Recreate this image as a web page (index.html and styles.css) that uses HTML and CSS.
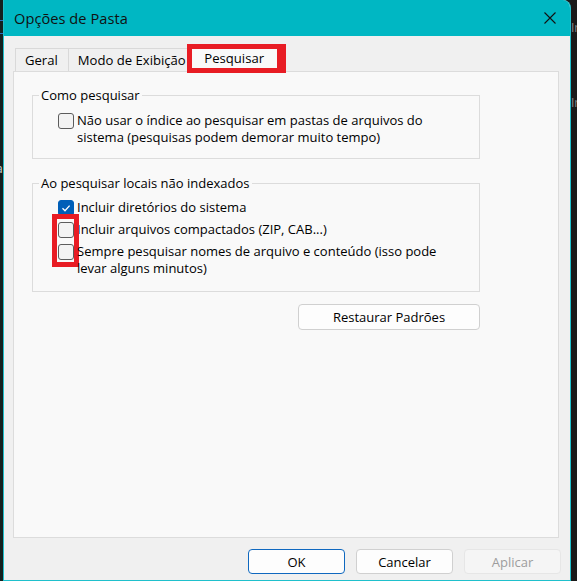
FILE: index.html
```html
<!DOCTYPE html>
<html lang="pt-BR">
<head>
<meta charset="utf-8">
<title>Opções de Pasta</title>
<link rel="stylesheet" href="styles.css">
</head>
<body>
<div class="desk">
  <div class="edge edge-left"><span class="frag frag-a"></span><span class="frag frag-b"></span><span class="frag frag-c">a</span></div>
  <div class="window">
    <div class="titlebar">
      <span class="title">Opções de Pasta</span>
      <span class="close">
        <svg width="12" height="12" viewBox="0 0 12 12"><path d="M0.5 0.5 L11.5 11.5 M11.5 0.5 L0.5 11.5" stroke="#111" stroke-width="1.1" fill="none"/></svg>
      </span>
    </div>
    <div class="content">
      <div class="tabs">
        <div class="tab tab-first">Geral</div>
        <div class="tab">Modo de Exibição</div>
        <div class="tab tab-active">Pesquisar<span class="mark mark-tab"></span></div>
      </div>
      <div class="panel">
        <fieldset class="group group-one">
          <legend>Como pesquisar</legend>
          <div class="opt">
            <span class="box"></span>
            <span class="lbl">Não usar o índice ao pesquisar em pastas de arquivos do<br>sistema (pesquisas podem demorar muito tempo)</span>
          </div>
        </fieldset>
        <fieldset class="group group-two">
          <legend>Ao pesquisar locais não indexados</legend>
          <div class="opt">
            <span class="box box-on"><svg width="14" height="14" viewBox="0 0 14 14"><path d="M3.5 7.3 L6 9.7 L10.6 4.6" stroke="#fff" stroke-width="1.3" fill="none"/></svg></span>
            <span class="lbl">Incluir diretórios do sistema</span>
          </div>
          <div class="opt opt-marked">
            <span class="box"></span>
            <span class="lbl">Incluir arquivos compactados (ZIP, CAB...)</span>
            <span class="mark mark-boxes"></span>
          </div>
          <div class="opt">
            <span class="box"></span>
            <span class="lbl">Sempre pesquisar nomes de arquivo e conteúdo (isso pode<br>levar alguns minutos)</span>
          </div>
        </fieldset>
        <div class="restore-row">
          <button class="btn btn-restore">Restaurar Padrões</button>
        </div>
      </div>
      <div class="footer">
        <button class="btn btn-ok">OK</button>
        <button class="btn">Cancelar</button>
        <button class="btn btn-off">Aplicar</button>
      </div>
    </div>
  </div>
  <div class="edge edge-right"><span class="ghost g1">Ir</span><span class="ghost g2">Ir</span></div>
</div>
</body>
</html>
```

FILE: styles.css
```css
* { box-sizing: border-box; }
html, body { margin: 0; padding: 0; }
body {
  background: #191b1c;
  font-family: "Open Sans", "Noto Sans", sans-serif;
  font-size: 13px;
  color: #000;
  width: 577px;
  height: 581px;
  overflow: hidden;
}
.desk { display: flex; height: 581px; }
.edge { flex: none; position: relative; overflow: hidden; }
.edge-left { width: 3px; background: #14201f; }
.frag { position: absolute; left: 0; width: 3px; height: 1px; background: #2c6fc2; }
.frag-a { top: 20px; }
.frag-b { top: 33px; }
.frag-c { top: 160px; height: 14px; background: transparent; color: #cfd6d6; font-size: 12px; left: -4px; width: 8px; }
.edge-right { width: 6px; background: #1a1a1a; }
.ghost { position: absolute; left: 0; color: #8a8a8a; font-size: 12px; line-height: 14px; }
.g1 { top: 21px; }
.g2 { top: 96px; }

.window {
  width: 568px;
  flex: none;
  display: flex;
  flex-direction: column;
  background: #f0f0f0;
  border: 1px solid #1fc0cc;
  border-top: 0;
  border-top-right-radius: 8px;
  overflow: hidden;
}
.titlebar {
  height: 36px;
  flex: none;
  background: #00b7c3;
  display: flex;
  align-items: center;
  justify-content: space-between;
  padding: 0 14px 0 10px;
}
.title { font-size: 14.6px; color: #111; letter-spacing: 0.05px; }
.close { display: flex; width: 12px; height: 12px; }

.content { padding: 8px 0 0 9px; display: flex; flex-direction: column; }

.tabs { display: flex; align-items: flex-end; height: 27px; padding-left: 2px; }
.tab {
  height: 23px;
  padding: 0 9px;
  display: flex;
  align-items: center;
  border: 1px solid #d9d9d9;
  border-bottom: 0;
  border-left: 0;
  background: #f0f0f0;
  color: #000;
  font-size: 13.1px;
}
.tab-first { border-left: 1px solid #d9d9d9; padding: 0 10px 0 9px; }
.tab-active {
  position: relative;
  height: 27px;
  background: #f9f9f9;
  padding: 0 14px 0 14px;
  margin-left: -7px;
  width: 92px;
  justify-content: center;
  align-items: flex-start;
  padding-top: 4px;
  z-index: 1;
}
.mark { position: absolute; border-color: #e81c24; border-style: solid; pointer-events: none; }
.mark-tab { left: -2px; top: -1px; width: 99px; height: 29px; border-width: 5px 9px 5px 5px; }

.panel {
  width: 546px;
  height: 467px;
  background: #f9f9f9;
  border: 1px solid #dcdcdc;
  padding: 15px 0 0 18px;
  display: flex;
  flex-direction: column;
}
.group {
  width: 448px;
  margin: 0;
  border: 1px solid #dcdcdc;
  padding: 0 0 0 25px;
  min-width: 0;
}
.group legend {
  padding: 0 2px;
  margin-left: -19px;
  line-height: 17px;
  font-size: 13px;
}
.group-one { padding-top: 8px; padding-bottom: 12px; }
.group-two { margin-top: 16px; padding-top: 7px; padding-bottom: 14px; }
.opt { display: flex; align-items: flex-start; line-height: 17px; position: relative; }
.opt + .opt { margin-top: 5px; }
.box {
  flex: none;
  width: 16px;
  height: 16px;
  margin-top: 1px;
  margin-right: 3px;
  border: 1px solid #5c5c5c;
  border-radius: 3px;
  background: #f3f3f3;
  display: flex;
  align-items: center;
  justify-content: center;
}
.box-on { background: #005fb8; border-color: #005fb8; }
.mark-boxes { left: -6px; top: -7px; width: 27px; height: 53px; border-width: 5px; }

.restore-row { width: 448px; display: flex; justify-content: flex-end; margin-top: 12px; }
.btn {
  font-family: inherit;
  font-size: 13px;
  color: #000;
  background: #fdfdfd;
  border: 1px solid #d0d0d0;
  border-radius: 4px;
  height: 26px;
  padding: 0;
  margin: 0;
}
.btn-restore { width: 182px; }

.footer { display: flex; justify-content: flex-end; gap: 11px; padding-right: 9px; margin-top: 11px; }
.footer .btn { width: 97px; height: 25px; }
.btn-ok { border-color: #0f68bf; }
.btn-off { background: #f5f5f5; border-color: #e6e6e6; color: #9d9d9d; }
```
